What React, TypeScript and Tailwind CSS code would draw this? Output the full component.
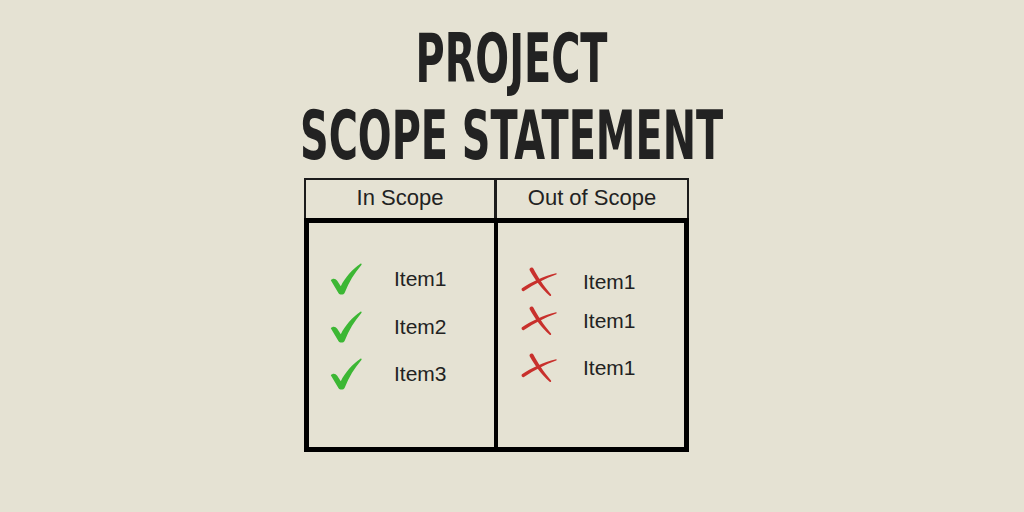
const CHECK_ITEMS = [
  { label: "Item1", mt: "mt-0" },
  { label: "Item2", mt: "mt-[12px]" },
  { label: "Item3", mt: "mt-[11px]" },
];

const CROSS_ITEMS = [
  { label: "Item1", mt: "mt-0" },
  { label: "Item1", mt: "mt-[3px]" },
  { label: "Item1", mt: "mt-[11px]" },
];

function CheckMark() {
  return (
    <svg width="32" height="32" viewBox="0 0 32 32" aria-hidden>
      <path
        d="M0.8 17.2 C2.6 15 5.6 15.2 7.2 17.8 L10.8 23.2 C15.4 14.2 22 6.6 30.4 0.8 C31.4 0.2 32 1.2 31.4 2 C24.6 9.8 18.8 19.4 14.8 29.4 C13.8 32 9.8 32.4 8.4 30 Z"
        fill="#3cb734"
      />
    </svg>
  );
}

function CrossMark() {
  return (
    <svg width="36" height="30" viewBox="0 0 36 30" aria-hidden>
      <path
        d="M1 21.2 C10 15.2 22 9.2 35 6.2 C35.8 6 36 7.2 35.2 7.6 C24 11.4 13.4 17.4 3 24 C1.2 25 -0.2 22.4 1 21.2 Z"
        fill="#c8302c"
      />
      <path
        d="M8.8 1.4 C10 0 11.8 0.4 12.4 1.6 C16.4 9 22.4 19 30 27.4 C30.6 28.4 29.6 29.6 28.6 28.8 C20.6 22 13.6 12.2 8.8 3.6 C8.4 2.8 8.4 2 8.8 1.4 Z"
        fill="#c8302c"
      />
    </svg>
  );
}

export default function App() {
  return (
    <div className="flex h-[512px] w-[1024px] flex-col items-center bg-[#e5e2d3] pt-[21px] font-['Liberation_Sans',Arial,sans-serif] text-[#222]">
      <h1 className="flex scale-x-[0.66] flex-col items-center font-['DejaVu_Sans_Condensed',sans-serif] text-[67px] font-bold leading-[77px] whitespace-nowrap text-[#222]">
        <span>PROJECT</span>
        <span>SCOPE STATEMENT</span>
      </h1>

      <div className="mt-[3px] ml-[-31px] flex w-[385px] flex-col">
        <div className="flex h-[40px] border-x-2 border-t-2 border-[#1c1c1c] text-[22px] leading-none">
          <div className="flex w-[191px] items-center justify-center border-r-[3px] border-[#1c1c1c] pb-[2px]">
            In Scope
          </div>
          <div className="flex flex-1 items-center justify-center pb-[2px]">Out of Scope</div>
        </div>

        <div className="flex h-[234px] border-[5px] border-black text-[21px]">
          <div className="flex w-[189px] flex-col border-r-[4px] border-black pt-[38px] pl-[21px]">
            {CHECK_ITEMS.map((item) => (
              <div key={item.label} className={`flex h-[36px] items-center gap-[32px] ${item.mt}`}>
                <CheckMark />
                <span>{item.label}</span>
              </div>
            ))}
          </div>
          <div className="flex flex-1 flex-col pt-[41px] pl-[23px]">
            {CROSS_ITEMS.map((item, i) => (
              <div key={i} className={`flex h-[36px] items-center gap-[26px] ${item.mt}`}>
                <CrossMark />
                <span>{item.label}</span>
              </div>
            ))}
          </div>
        </div>
      </div>
    </div>
  );
}
